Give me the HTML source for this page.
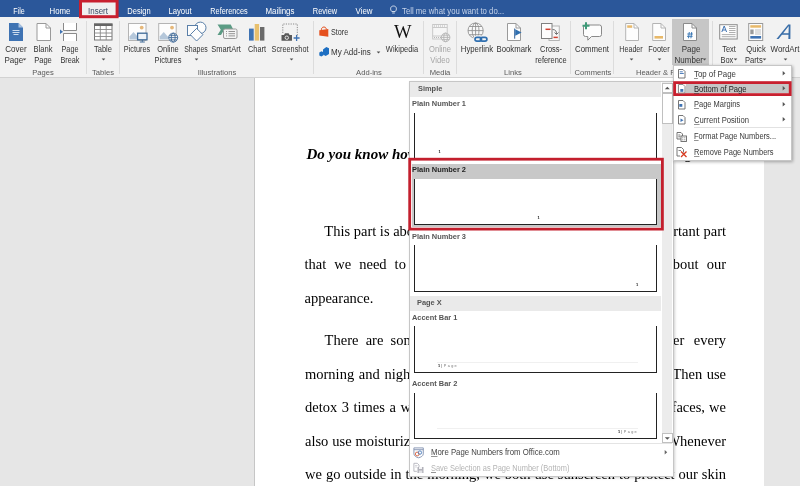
<!DOCTYPE html>
<html><head><meta charset="utf-8">
<style>
html,body{margin:0;padding:0;}
body{width:800px;height:486px;overflow:hidden;position:relative;background:#e6e6e6;font-family:"Liberation Sans",sans-serif;}
.abs{position:absolute;}
svg{position:absolute;overflow:visible;}
#titlebar{left:0;top:0;width:800px;height:17.3px;background:#2b579a;}
.tab{position:absolute;top:6px;font-size:8.4px;color:#fff;white-space:nowrap;transform:translateX(-50%);line-height:10px;}
#ribbon{left:0;top:17.3px;width:800px;height:59.4px;background:#f2f2f2;border-bottom:1px solid #d2d2d2;}
.l{position:absolute;font-size:8.4px;color:#333;white-space:nowrap;transform:translateX(-50%);line-height:11px;text-align:center;}
.ll{position:absolute;font-size:8.4px;color:#333;white-space:nowrap;line-height:11px;}
.g{position:absolute;font-size:8px;color:#5a5a5a;white-space:nowrap;transform:translateX(-50%) scaleX(0.95);line-height:10px;top:68px;}
.sep{position:absolute;top:21px;width:1px;height:53px;background:#dcdcdc;}
.ar{position:absolute;width:0;height:0;border-left:1.8px solid transparent;border-right:1.8px solid transparent;border-top:1.8px solid #555;}
#page{left:254.3px;top:77.7px;width:509px;height:409px;background:#fff;border-left:1px solid #c6c6c6;}
.doc{position:absolute;font-family:"Liberation Serif",serif;font-size:14.5px;color:#000;white-space:nowrap;line-height:18px;}
.mi{position:absolute;transform-origin:left center;left:694px;font-size:8.4px;color:#3a3a3a;white-space:nowrap;line-height:11px;}
.mi u{text-decoration-thickness:0.6px;text-underline-offset:0.5px;text-decoration-color:rgba(60,60,60,0.55);}
.gl{position:absolute;transform:scaleX(0.94);transform-origin:left center;left:412px;font-size:7.9px;font-weight:bold;color:#555;white-space:nowrap;line-height:10px;}
.vl{position:absolute;width:1px;background:#222;}
.hl{position:absolute;height:1px;background:#222;}
.tiny{position:absolute;font-size:4px;font-weight:bold;color:#111;line-height:5px;white-space:nowrap;}
</style></head><body>
<div id="root" style="will-change:transform;position:absolute;left:0;top:0;width:800px;height:486px;overflow:hidden;">
<div id="titlebar" class="abs"></div>
<div id="ribbon" class="abs"></div>
<div id="page" class="abs"></div>

<div class="tab" style="left:18.5px;transform:translateX(-50%) scaleX(0.849)">File</div>
<div class="tab" style="left:59.5px;transform:translateX(-50%) scaleX(0.937)">Home</div>
<div class="tab" style="left:138.5px;transform:translateX(-50%) scaleX(0.899)">Design</div>
<div class="tab" style="left:179.5px;transform:translateX(-50%) scaleX(0.924)">Layout</div>
<div class="tab" style="left:228.5px;transform:translateX(-50%) scaleX(0.873)">References</div>
<div class="tab" style="left:279.5px;transform:translateX(-50%) scaleX(0.941)">Mailings</div>
<div class="tab" style="left:325px;transform:translateX(-50%) scaleX(0.889)">Review</div>
<div class="tab" style="left:363.5px;transform:translateX(-50%) scaleX(0.941)">View</div>
<svg width="800" height="486" style="left:0;top:0"><rect x="80.50" y="1.00" width="36.60" height="15.70" fill="#f0f0f0" stroke="#c8202f" stroke-width="3.0"/></svg>
<div class="tab" style="left:98px;color:#3b4a63;transform:translateX(-50%) scaleX(0.95)">Insert</div>
<div class="tab" style="left:402px;transform:scaleX(0.926);transform-origin:left;color:#c5d3ea">Tell me what you want to do...</div>
<div class="sep" style="left:86px"></div>
<div class="sep" style="left:119px"></div>
<div class="sep" style="left:312.5px"></div>
<div class="sep" style="left:423px"></div>
<div class="sep" style="left:455.5px"></div>
<div class="sep" style="left:570px"></div>
<div class="sep" style="left:613px"></div>
<div class="sep" style="left:712px"></div>
<div class="abs" style="left:672px;top:19px;width:37px;height:46px;background:#c6c6c6"></div>
<div class="l" style="left:15.9px;top:44px;transform:translateX(-50%) scaleX(0.959);">Cover<br>Page&nbsp;&nbsp;</div>
<svg width="5" height="4" style="left:22.0px;top:58.0px"><path d="M0.700 0.600h3.600l-1.800 2z" fill="#505050"/></svg>
<div class="l" style="left:43px;top:44px;transform:translateX(-50%) scaleX(0.904);">Blank<br>Page</div>
<div class="l" style="left:70px;top:44px;transform:translateX(-50%) scaleX(0.866);">Page<br>Break</div>
<div class="l" style="left:103px;top:44px;transform:translateX(-50%) scaleX(0.896);">Table</div>
<svg width="5" height="4" style="left:100.5px;top:58.0px"><path d="M0.700 0.600h3.600l-1.800 2z" fill="#505050"/></svg>
<div class="l" style="left:137.25px;top:44px;transform:translateX(-50%) scaleX(0.873);">Pictures</div>
<div class="l" style="left:167.5px;top:44px;transform:translateX(-50%) scaleX(0.890);">Online<br>Pictures</div>
<div class="l" style="left:196.2px;top:44px;transform:translateX(-50%) scaleX(0.828);">Shapes</div>
<svg width="5" height="4" style="left:193.5px;top:58.0px"><path d="M0.700 0.600h3.600l-1.800 2z" fill="#505050"/></svg>
<div class="l" style="left:226.35px;top:44px;transform:translateX(-50%) scaleX(0.896);">SmartArt</div>
<div class="l" style="left:257px;top:44px;transform:translateX(-50%) scaleX(0.876);">Chart</div>
<div class="l" style="left:290.45px;top:44px;transform:translateX(-50%) scaleX(0.873);">Screenshot</div>
<svg width="5" height="4" style="left:288.5px;top:58.0px"><path d="M0.700 0.600h3.600l-1.800 2z" fill="#505050"/></svg>
<div class="l" style="left:401.7px;top:44px;transform:translateX(-50%) scaleX(0.890);">Wikipedia</div>
<div class="l" style="left:440px;top:44px;color:#a6a6a6;transform:translateX(-50%) scaleX(0.906);">Online<br>Video</div>
<div class="l" style="left:477.25px;top:44px;transform:translateX(-50%) scaleX(0.928);">Hyperlink</div>
<div class="l" style="left:513.5px;top:44px;transform:translateX(-50%) scaleX(0.926);">Bookmark</div>
<div class="l" style="left:550.75px;top:44px;transform:translateX(-50%) scaleX(0.888);">Cross-<br>reference</div>
<div class="l" style="left:592px;top:44px;transform:translateX(-50%) scaleX(0.934);">Comment</div>
<div class="l" style="left:631.25px;top:44px;transform:translateX(-50%) scaleX(0.853);">Header</div>
<svg width="5" height="4" style="left:628.5px;top:58.0px"><path d="M0.700 0.600h3.600l-1.800 2z" fill="#505050"/></svg>
<div class="l" style="left:659.25px;top:44px;transform:translateX(-50%) scaleX(0.885);">Footer</div>
<svg width="5" height="4" style="left:656.5px;top:58.0px"><path d="M0.700 0.600h3.600l-1.800 2z" fill="#505050"/></svg>
<div class="l" style="left:690.5px;top:44px;transform:translateX(-50%) scaleX(0.955);">Page<br>Number&nbsp;&nbsp;</div>
<svg width="5" height="4" style="left:702.0px;top:58.0px"><path d="M0.700 0.600h3.600l-1.800 2z" fill="#505050"/></svg>
<div class="l" style="left:728.5px;top:44px;transform:translateX(-50%) scaleX(0.888);">Text<br>Box&nbsp;&nbsp;</div>
<svg width="5" height="4" style="left:732.5px;top:58.0px"><path d="M0.700 0.600h3.600l-1.800 2z" fill="#505050"/></svg>
<div class="l" style="left:756px;top:44px;transform:translateX(-50%) scaleX(0.906);">Quick<br>Parts&nbsp;&nbsp;</div>
<svg width="5" height="4" style="left:762.0px;top:58.0px"><path d="M0.700 0.600h3.600l-1.800 2z" fill="#505050"/></svg>
<div class="l" style="left:784.5px;top:44px;transform:translateX(-50%) scaleX(0.946);">WordArt</div>
<svg width="5" height="4" style="left:782.5px;top:58.0px"><path d="M0.700 0.600h3.600l-1.800 2z" fill="#505050"/></svg>
<div class="ll" style="left:331px;top:27px;transform:scaleX(0.86);transform-origin:left">Store</div>
<div class="ll" style="left:331px;top:47px;transform:scaleX(0.96);transform-origin:left">My Add-ins</div>
<svg width="5" height="4" style="left:376.2px;top:51.2px"><path d="M0.700 0.600h3.600l-1.800 2z" fill="#505050"/></svg>
<div class="g" style="left:43.2px">Pages</div>
<div class="g" style="left:102.5px">Tables</div>
<div class="g" style="left:216.7px">Illustrations</div>
<div class="g" style="left:368.5px">Add-ins</div>
<div class="g" style="left:440px">Media</div>
<div class="g" style="left:513.3px">Links</div>
<div class="g" style="left:593px">Comments</div>
<div class="g" style="left:663.5px">Header &amp; Footer</div>
<svg width="800" height="78" style="left:0;top:0" viewBox="0 0 800 78">
<!-- cover page -->
<path d="M9 23h9.5l4.5 4.5V41H9z" fill="#3f73b3"/>
<path d="M18.5 23v4.5H23z" fill="#a9c3e4"/>
<path d="M12.5 30.5h7M12.5 32.5h7M13.5 34.5h5" stroke="#dfe9f5" stroke-width="0.9"/>
<!-- blank page -->
<path d="M37 23.5h9l4.5 4.5v12.5H37z" fill="#fff" stroke="#9a9a9a" stroke-width="1"/>
<path d="M46 23.5V28h4.5" fill="none" stroke="#9a9a9a" stroke-width="1"/>
<!-- page break -->
<path d="M63.5 23v7.5h13V23M63.5 41v-7.5h13V41" fill="#fff" stroke="#8a8a8a" stroke-width="1"/>
<path d="M60 29.5l3 2.3-3 2.3z" fill="#3f73b3"/>
<!-- table -->
<rect x="94.5" y="24" width="17.5" height="16" fill="#fff" stroke="#777" stroke-width="1"/>
<rect x="94" y="23.5" width="18.5" height="2.5" fill="#666"/>
<path d="M94.5 29.5h17.5M94.5 33h17.5M94.5 36.500h17.5M100.300 26v14M106.200 26v14" stroke="#8a8a8a" stroke-width="0.9"/>
<!-- pictures -->
<g id="pic">
<rect x="128.500" y="23.500" width="17.500" height="17" fill="#fdfdfd" stroke="#b4b4b4" stroke-width="1"/>
<circle cx="141.700" cy="27.600" r="1.900" fill="#e6b87a"/>
<path d="M129.500 39.500v-3l4-4.500 4.500 5v2.500z" fill="#b5c7da"/>
</g>
<rect x="137.600" y="33.200" width="9.400" height="6.600" fill="#eef3f8" stroke="#3f6a98" stroke-width="1.300"/>
<path d="M142.300 40v1.800M139.800 42h5" stroke="#3f6a98" stroke-width="1"/>
<!-- online pictures -->
<rect x="158.700" y="23.500" width="17.500" height="17" fill="#fdfdfd" stroke="#b4b4b4" stroke-width="1"/>
<circle cx="172" cy="27.600" r="1.900" fill="#e6b87a"/>
<path d="M159.700 39.500v-3l4-4.500 4.500 5v2.500z" fill="#b5c7da"/>
<g fill="none" stroke="#3f6a98" stroke-width="0.900">
<circle cx="173.200" cy="37.600" r="4.500" fill="#f3f3f3"/>
<ellipse cx="173.200" cy="37.600" rx="2" ry="4.500"/>
<path d="M168.700 37.600h9M169.500 35.300h7.400M169.500 39.900h7.400"/>
</g>
<!-- shapes -->
<g fill="#fdfdfd" stroke="#5a7fa8" stroke-width="1">
<circle cx="200.300" cy="27.800" r="5.700"/>
<rect x="187.500" y="25.500" width="10" height="10"/>
<path d="M196.600 28.400l6.300 6.300-6.300 6.300-6.300-6.300z"/>
</g>
<!-- smartart -->
<path d="M217.500 24.500h13.200l2.600 5h-9l-3.300 5.500h-3.500l3.300-5.300z" fill="#5b9b84"/>
<rect x="223.500" y="29" width="13.500" height="9.500" rx="1.500" fill="#f4f4f4" stroke="#9a9a9a" stroke-width="1"/>
<path d="M226 31.500h1M228.500 31.500h6.500M226 33.700h1M228.500 33.700h6.500M226 35.900h1M228.500 35.900h6.500" stroke="#8a8a8a" stroke-width="0.900"/>
<!-- chart -->
<rect x="249" y="28.600" width="4.700" height="12" fill="#3f73b3"/>
<rect x="254.700" y="24" width="4.400" height="16.600" fill="#e8c06e"/>
<rect x="260" y="27" width="4.400" height="13.600" fill="#6a6a6a"/>
<!-- screenshot -->
<path d="M282.800 33V24h14.500v12.500" fill="none" stroke="#8a8a8a" stroke-width="1" stroke-dasharray="1.200 1.200"/>
<path d="M281.500 35h2.500l1-1.700h3.600l1 1.700h2.400v5.800h-10.500z" fill="#5a5a5a"/>
<circle cx="286.800" cy="37.700" r="1.700" fill="#5a5a5a" stroke="#f3f3f3" stroke-width="0.900"/>
<path d="M293.600 38h6M296.600 35v6" stroke="#3f73b3" stroke-width="1.300"/>
<!-- store -->
<path d="M319.300 30.200l9-1.300v7.800l-9-1.200z" fill="#e5501e"/>
<path d="M321.300 29.900c0-3.800 5-3.800 5-0.600" fill="none" stroke="#e5501e" stroke-width="1"/>
<!-- my add-ins -->
<path d="M323 49.500l3.300-2.500 2.700 1.300v5.700l-3.300 2-2.700-1.500z" fill="#1e6fc2"/>
<path d="M319.300 52.500l2.200-1.300 2 1v3l-2.200 1.200-2-1z" fill="#1e6fc2"/>
<!-- online video -->
<g stroke="#c4c4c4" fill="none" stroke-width="0.9">
<rect x="432.700" y="24.500" width="14.500" height="14.500" fill="#f6f6f6"/>
<path d="M432.700 27.500h14.500M432.700 36h14.500"/>
<path d="M434 26h12M434 37.500h8" stroke-dasharray="1 1" stroke="#b0b0b0"/>
<circle cx="445.600" cy="37.400" r="4.300" fill="#f3f3f3" stroke="#b4b4b4"/>
<ellipse cx="445.600" cy="37.400" rx="1.900" ry="4.300" stroke="#b4b4b4"/>
<path d="M441.300 37.400h8.600M442 35.200h7.200M442 39.600h7.200" stroke="#b4b4b4"/>
</g>
<!-- hyperlink -->
<g stroke="#8c8c8c" fill="none" stroke-width="0.85">
<circle cx="475.600" cy="30.600" r="7.600" fill="#f8f8f8"/>
<ellipse cx="475.600" cy="30.600" rx="3.400" ry="7.600"/>
<path d="M468 30.600h15.200M469.300 26.500h12.600M469.300 34.700h12.600M475.600 23v15.200"/>
</g>
<g stroke="#2f6fb0" fill="none" stroke-width="1.700">
<rect x="475" y="37.300" width="6.500" height="3.800" rx="1.900" stroke="#f3f3f3" stroke-width="3.600"/>
<rect x="480.400" y="37.300" width="6.500" height="3.800" rx="1.900" stroke="#f3f3f3" stroke-width="3.600"/>
<rect x="475" y="37.300" width="6.500" height="3.800" rx="1.900"/>
<rect x="480.400" y="37.300" width="6.500" height="3.800" rx="1.900"/>
</g>
<!-- bookmark -->
<path d="M507.500 23.500h8.500l4.500 4.500v12.500h-13z" fill="#fdfdfd" stroke="#9a9a9a" stroke-width="1"/>
<path d="M516 23.500V28h4.500" fill="none" stroke="#9a9a9a" stroke-width="1"/>
<path d="M514.700 28.500v10.200" stroke="#2f5f98" stroke-width="1"/>
<path d="M515.200 29.300l6.400 3.200-6.400 3.200z" fill="#2f6fb0"/>
<!-- cross reference -->
<rect x="549" y="26" width="10.300" height="14.500" fill="#f8f8f8" stroke="#b4b4b4" stroke-width="1"/>
<rect x="541.500" y="23.500" width="10.500" height="15" fill="#fdfdfd" stroke="#808080" stroke-width="1"/>
<path d="M545.500 29.300h5" stroke="#d04030" stroke-width="1.500"/>
<path d="M553.500 37.400h4.300" stroke="#d04030" stroke-width="1.500"/>
<path d="M552.500 29.500c3 0 4 1.500 4 4.500M554.500 32.500l2 2 2-2" fill="none" stroke="#707070" stroke-width="1"/>
<!-- comment -->
<path d="M585.500 25h14a2 2 0 0 1 2 2v7.500a2 2 0 0 1-2 2h-8l-3.700 3.700v-3.700h-2.300a2 2 0 0 1-2-2V27a2 2 0 0 1 2-2z" fill="#fdfdfd" stroke="#8a8a8a" stroke-width="1"/>
<path d="M582.500 25.800h7M586 22.300v7" stroke="#3e9a78" stroke-width="2"/>
<!-- header -->
<path d="M625.700 23.500h8.300l4.500 4.500v12.500h-12.800z" fill="#fdfdfd" stroke="#b4b4b4" stroke-width="1"/>
<path d="M634 23.500V28h4.500" fill="none" stroke="#b4b4b4" stroke-width="1"/>
<rect x="627.200" y="25.300" width="5" height="2.500" fill="#e8b96a"/>
<!-- footer -->
<path d="M652.700 23.500h8.300l4.500 4.500v12.500h-12.800z" fill="#fdfdfd" stroke="#b4b4b4" stroke-width="1"/>
<path d="M661 23.500V28h4.500" fill="none" stroke="#b4b4b4" stroke-width="1"/>
<rect x="654.500" y="36" width="8.500" height="2.600" fill="#e8b96a"/>
<!-- page number -->
<path d="M683.500 23.500h8.500l4.500 4.500v12.500h-13z" fill="#fdfdfd" stroke="#8a8a8a" stroke-width="1"/>
<path d="M692 23.500V28h4.500" fill="none" stroke="#8a8a8a" stroke-width="1"/>
<path d="M687.300 34h5.600M687 36.300h5.600M689.300 32l-0.800 6.300M691.700 32l-0.800 6.300" stroke="#2f6fb0" stroke-width="0.900" fill="none"/>
<!-- text box -->
<rect x="719.700" y="24.700" width="17.500" height="14.300" fill="#fdfdfd" stroke="#8a8a8a" stroke-width="1"/>
<path d="M721.800 32l2.400-6 2.400 6M722.700 30h3" fill="none" stroke="#3f73b3" stroke-width="1"/>
<path d="M729 26.500h6.500M729 28.500h6.500M729 30.500h6.500M729 32.500h6.500M721.800 34.600h13.700M721.800 36.700h13.700" stroke="#9a9a9a" stroke-width="0.800"/>
<!-- quick parts -->
<rect x="748.700" y="23.500" width="14" height="17" fill="#fdfdfd" stroke="#9a9a9a" stroke-width="1"/>
<rect x="750.300" y="25.200" width="10.800" height="2.500" fill="#e8b96a"/>
<rect x="750.300" y="29.500" width="3.300" height="4.700" fill="#9a9a9a"/>
<path d="M755 30h6M755 32h6M755 34h6" stroke="#b0b0b0" stroke-width="0.800"/>
<rect x="750.300" y="36" width="10.800" height="2.600" fill="#3f73b3"/>
<!-- wordart -->
<text x="0" y="0" transform="translate(777.500 39.300) skewX(-12)" font-family="Liberation Sans, sans-serif" font-style="italic" font-size="21" fill="#3a6ea8">A</text>
<!-- lightbulb -->
<g fill="none" stroke="#dfe7f3" stroke-width="0.900">
<path d="M391.800 11.500c-1.800-1.500-1.800-5.500 1.700-5.500s3.500 4 1.700 5.500zM392.200 13h2.600"/>
</g>
</svg>
<div class="abs" style="left:393.600px;top:22.500px;font-family:'Liberation Serif',serif;font-size:18px;line-height:18px;color:#111;transform:scaleX(1.03);transform-origin:left;">W</div>

<!-- DOCUMENT TEXT -->
<div class="doc" style="left:306.500px;top:145px;font-size:15px;font-weight:bold;font-style:italic;">Do you know how to take care</div>
<div class="doc" style="left:685.500px;top:145px;font-size:15px;font-weight:bold;font-style:italic;">g</div>
<div class="doc" style="left:324.300px;top:222px;">This part is about one of the most impo</div>
<div class="doc" style="right:74px;top:222px;">rtant part</div>
<div class="doc" style="left:304.500px;top:255px;word-spacing:4.400px;">that we need to know</div>
<div class="doc" style="right:74px;top:255px;word-spacing:4.500px;">bout our</div>
<div class="doc" style="left:304.500px;top:289px;">appearance.</div>
<div class="doc" style="left:324.600px;top:330.500px;word-spacing:3.600px;">There are some things</div>
<div class="doc" style="right:74px;top:330.500px;word-spacing:5.800px;">er every</div>
<div class="doc" style="left:305px;top:364.500px;word-spacing:1.100px;">morning and night. First</div>
<div class="doc" style="right:74px;top:364.500px;word-spacing:0.800px;">Then use</div>
<div class="doc" style="left:305px;top:398px;word-spacing:0.900px;">detox 3 times a week</div>
<div class="doc" style="right:74px;top:398px;word-spacing:0.500px;">faces, we</div>
<div class="doc" style="left:305px;top:431.500px;word-spacing:0.300px;">also use moisturizer</div>
<div class="doc" style="right:74px;top:431.500px;">Whenever</div>
<div class="doc" style="left:305px;top:465px;width:421px;white-space:normal;text-align:justify;text-align-last:justify;">we go outside in the morning, we both use sunscreen to protect our skin</div>

<!-- GALLERY DROPDOWN -->
<div class="abs" style="left:409px;top:81px;width:263px;height:394px;background:#fff;border:1px solid #c6c6c6;box-shadow:1px 1px 2.500px rgba(0,0,0,0.18);box-sizing:content-box;"></div>
<div class="abs" style="left:410px;top:82px;width:251px;height:14.500px;background:#eaeaea;"></div>
<div class="gl" style="left:418px;top:84.100px;color:#555;">Simple</div>
<!-- scrollbar -->
<div class="abs" style="left:662px;top:82px;width:10px;height:361px;background:#ececec;"></div>
<div class="abs" style="left:662px;top:82.800px;width:8.500px;height:8.500px;background:#fff;border:1px solid #c0c0c0;"></div>
<div class="abs" style="left:662px;top:92.800px;width:8.500px;height:29.500px;background:#fff;border:1px solid #c0c0c0;"></div>
<div class="abs" style="left:662px;top:432.500px;width:8.500px;height:8.500px;background:#fff;border:1px solid #c0c0c0;"></div>
<svg width="10" height="10" style="left:662px;top:82.800px"><path d="M2.800 6.300l2.500-2.500 2.500 2.500z" fill="#555"/></svg>
<svg width="10" height="10" style="left:662px;top:432.500px"><path d="M2.800 4.300l2.500 2.500 2.500-2.500z" fill="#555"/></svg>
<!-- Plain Number 1 -->
<div class="gl" style="top:98.500px;">Plain Number 1</div>
<div class="vl" style="left:414px;top:112.500px;height:48px;"></div>
<div class="vl" style="left:656px;top:112.500px;height:48px;"></div>
<div class="tiny" style="left:438.500px;top:148.700px;">1</div>
<!-- Plain Number 2 (selected) -->
<div class="abs" style="left:410px;top:160px;width:252px;height:69px;background:#fff;"></div>
<div class="abs" style="left:412px;top:164px;width:248.700px;height:14.500px;background:#c8c8c8;"></div>
<div class="abs" style="left:657px;top:164px;width:3.700px;height:63px;background:#c8c8c8;"></div>
<div class="abs" style="left:412px;top:224px;width:248.700px;height:3px;background:#c8c8c8;"></div>
<div class="abs" style="left:412px;top:164px;width:2.500px;height:63px;background:#c8c8c8;"></div>
<div class="gl" style="top:165px;color:#222;">Plain Number 2</div>
<div class="vl" style="left:414px;top:179px;height:46px;"></div>
<div class="vl" style="left:656px;top:179px;height:46px;"></div>
<div class="hl" style="left:414px;top:224px;width:243px;"></div>
<div class="tiny" style="left:537.500px;top:215.200px;">1</div>
<svg width="800" height="486" style="left:0;top:0"><rect x="409.70" y="159.20" width="252.70" height="69.90" fill="none" stroke="#c31f2d" stroke-width="2.8"/></svg>
<!-- Plain Number 3 -->
<div class="gl" style="top:231.500px;">Plain Number 3</div>
<div class="vl" style="left:414px;top:245px;height:46px;"></div>
<div class="vl" style="left:656px;top:245px;height:46px;"></div>
<div class="hl" style="left:414px;top:290.700px;width:243px;"></div>
<div class="tiny" style="left:636px;top:281.700px;">1</div>
<!-- Page X -->
<div class="abs" style="left:410px;top:296px;width:251px;height:14.500px;background:#eaeaea;"></div>
<div class="gl" style="left:416.500px;top:298.300px;color:#555;">Page X</div>
<!-- Accent Bar 1 -->
<div class="gl" style="top:312.800px;">Accent Bar 1</div>
<div class="vl" style="left:414px;top:326px;height:46.500px;"></div>
<div class="vl" style="left:656px;top:326px;height:46.500px;"></div>
<div class="hl" style="left:414px;top:371.800px;width:243px;"></div>
<div class="hl" style="left:437px;top:361.500px;width:201px;background:#f0f0f0;"></div>
<div class="tiny" style="left:438px;top:363.700px;font-size:3.800px;">1<span style="font-weight:normal;margin-left:1.200px;color:#333">|</span><span style="color:#777;letter-spacing:1.350px;font-weight:normal;margin-left:1.500px;">Page</span></div>
<!-- Accent Bar 2 -->
<div class="gl" style="top:378.700px;">Accent Bar 2</div>
<div class="vl" style="left:414px;top:393px;height:45.500px;"></div>
<div class="vl" style="left:656px;top:393px;height:45.500px;"></div>
<div class="hl" style="left:414px;top:437.800px;width:243px;"></div>
<div class="hl" style="left:437px;top:427.800px;width:201px;background:#f0f0f0;"></div>
<div class="tiny" style="left:618px;top:429.900px;font-size:3.800px;">1<span style="font-weight:normal;margin-left:1.200px;color:#333">|</span><span style="color:#777;letter-spacing:1.350px;font-weight:normal;margin-left:1.500px;">Page</span></div>
<!-- footer commands -->
<div class="abs" style="left:410px;top:442.800px;width:262px;height:1px;background:#e4e4e4;"></div>
<div class="mi" style="transform:scaleX(0.929);left:430.500px;top:447.400px;color:#444;"><u>M</u>ore Page Numbers from Office.com</div>
<div class="mi" style="transform:scaleX(0.890);left:430.500px;top:462.900px;color:#b4b4b4;"><u>S</u>ave Selection as Page Number (Bottom)</div>
<svg width="6" height="8" style="left:664.300px;top:449px"><path d="M0.700 1l2.500 2.300-2.500 2.300z" fill="#666"/></svg>
<svg width="12" height="12" style="left:412.500px;top:446.500px" viewBox="0 0 12 12">
<path d="M0.900 0.900h9.400v6c0 2-2.400 3.400-4.700 3.900-2.300-0.500-4.700-1.900-4.700-3.900z" fill="#fbfcfe" stroke="#8292b0" stroke-width="0.900"/>
<path d="M0.900 2.700h9.400" stroke="#8292b0" stroke-width="0.900"/>
<circle cx="4.200" cy="7" r="1.900" fill="none" stroke="#e0623a" stroke-width="0.900"/>
<circle cx="6.900" cy="5.600" r="1.700" fill="none" stroke="#4a7ab8" stroke-width="0.900"/>
</svg>
<svg width="12" height="12" style="left:412.500px;top:462px" viewBox="0 0 12 12">
<path d="M0.900 1.300h3.400l1.700 1.700v2M0.900 1.300v8h3" fill="none" stroke="#b4b4bc" stroke-width="0.900"/>
<path d="M2 3.500h2.500M2 5h2" stroke="#c4c4cc" stroke-width="0.700"/>
<rect x="4.500" y="5" width="6" height="6" fill="#b2b2ba"/>
<rect x="6" y="5" width="3" height="2" fill="#f4f4f6"/>
<rect x="5.800" y="8.500" width="3.400" height="2.500" fill="#e4e4e8"/>
</svg>

<!-- PAGE NUMBER SUBMENU -->
<div class="abs" style="left:673px;top:64.500px;width:117px;height:94.500px;background:#fff;border:1px solid #c6c6c6;box-shadow:1px 1px 3px rgba(0,0,0,0.3);"></div>
<div class="abs" style="left:675px;top:83px;width:115px;height:11.500px;background:#f6f0f0;"></div>
<div class="abs" style="left:686px;top:84.200px;width:103px;height:9px;background:#c6c6c6;"></div>
<svg width="800" height="486" style="left:0;top:0"><rect x="674.60" y="82.60" width="115.60" height="12.00" fill="none" stroke="#c8202f" stroke-width="2.8"/></svg>
<div class="abs" style="left:693.500px;top:127.300px;width:97px;height:1px;background:#e2e2e2;"></div>
<div class="mi" style="transform:scaleX(0.938);top:68.7px;"><u>T</u>op of Page</div>
<div class="mi" style="transform:scaleX(0.910);top:83.7px;color:#222;"><u>B</u>ottom of Page</div>
<div class="mi" style="transform:scaleX(0.892);top:99.3px;"><u>P</u>age Margins</div>
<div class="mi" style="transform:scaleX(0.914);top:114.7px;"><u>C</u>urrent Position</div>
<div class="mi" style="transform:scaleX(0.895);top:131.4px;"><u>F</u>ormat Page Numbers...</div>
<div class="mi" style="transform:scaleX(0.890);top:146.8px;"><u>R</u>emove Page Numbers</div>
<svg width="5" height="8" style="left:782px;top:70px"><path d="M0.700 1l2.600 2.300-2.600 2.300z" fill="#555"/></svg>
<svg width="5" height="8" style="left:782px;top:85.300px"><path d="M0.700 1l2.600 2.300-2.600 2.300z" fill="#555"/></svg>
<svg width="5" height="8" style="left:782px;top:100.500px"><path d="M0.700 1l2.600 2.300-2.600 2.300z" fill="#555"/></svg>
<svg width="5" height="8" style="left:782px;top:116px"><path d="M0.700 1l2.600 2.300-2.600 2.300z" fill="#555"/></svg>
<!-- menu icons -->
<svg width="10" height="10" style="left:677px;top:68.500px" viewBox="0 0 10 10">
<path d="M1.500 0.500h4.500l2 2v6.500h-6.500z" fill="#fff" stroke="#686868" stroke-width="0.900"/>
<path d="M2.800 2.800h3M2.800 4.500h4" stroke="#3f73b3" stroke-width="0.900"/></svg>
<svg width="10" height="10" style="left:677px;top:84px" viewBox="0 0 10 10">
<path d="M1.500 0.500h4.500l2 2v6.500h-6.500z" fill="#fff" stroke="#808080" stroke-width="0.900"/>
<rect x="3.300" y="5" width="3" height="2.800" fill="#3f73b3"/></svg>
<svg width="10" height="10" style="left:677px;top:99.500px" viewBox="0 0 10 10">
<path d="M1.500 0.500h4.500l2 2v6.500h-6.500z" fill="#fff" stroke="#686868" stroke-width="0.900"/>
<rect x="2.300" y="4" width="3" height="2.800" fill="#3f73b3"/></svg>
<svg width="10" height="10" style="left:677px;top:115px" viewBox="0 0 10 10">
<path d="M1.500 0.500h4.500l2 2v6.500h-6.500z" fill="#fff" stroke="#686868" stroke-width="0.900"/>
<path d="M3.500 3.500l3 1.800-3 1.800z" fill="#3f73b3"/></svg>
<svg width="12" height="10" style="left:676px;top:132px" viewBox="0 0 12 10">
<path d="M1 0.500h4l1.500 1.500v5h-5.500z" fill="#fff" stroke="#666" stroke-width="0.900"/>
<path d="M2.300 3h2M2.300 4.800h2" stroke="#555" stroke-width="0.800"/>
<rect x="5" y="4" width="5.500" height="5.500" fill="#fff" stroke="#666" stroke-width="0.900"/>
<path d="M6.300 5.800h3M6.300 7.800h3" stroke="#555" stroke-width="0.800" stroke-dasharray="1 1"/></svg>
<svg width="12" height="11" style="left:676px;top:146.500px" viewBox="0 0 12 11">
<path d="M1 0.500h4.500l2 2v3M1 0.500v8.500h3" fill="none" stroke="#666" stroke-width="0.900"/>
<path d="M2.500 3.500h2.500" stroke="#666" stroke-width="0.800"/>
<path d="M5 4.500l5.500 5.500M10.500 4.500l-5.500 5.500" stroke="#d83a20" stroke-width="1.300"/></svg>

</div>
</body></html>
